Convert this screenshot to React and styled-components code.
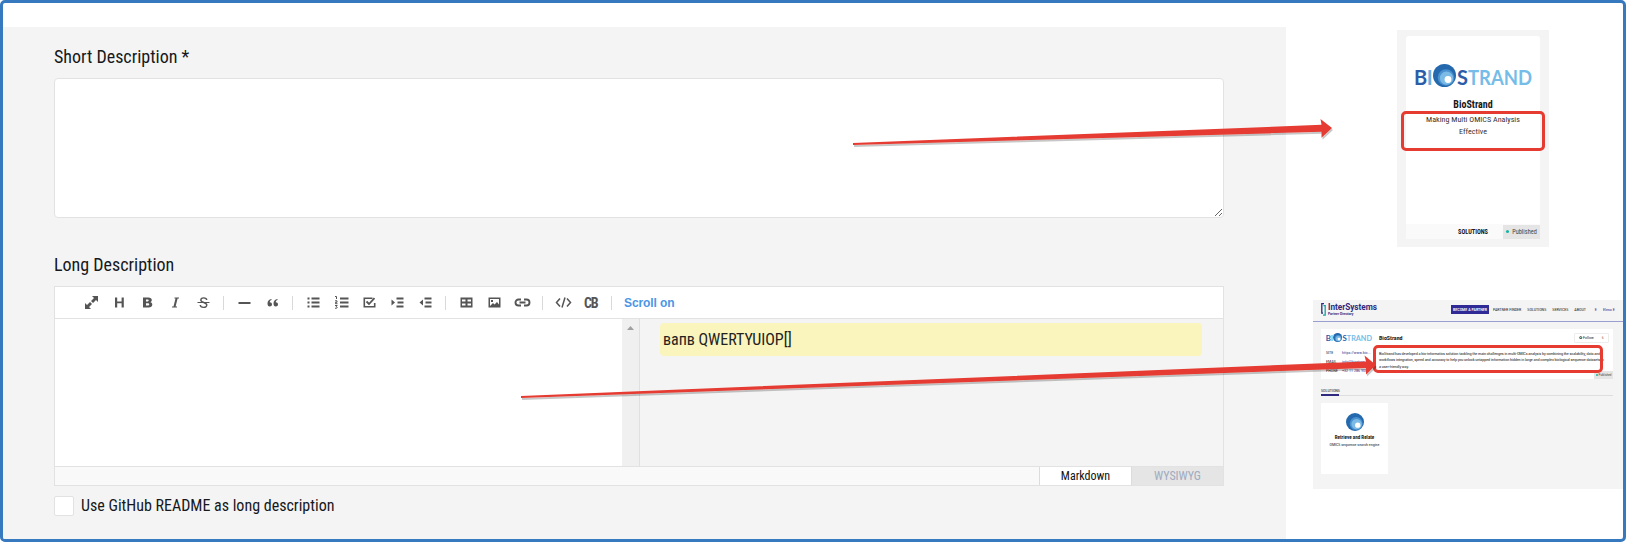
import React from 'react';
import styled, { createGlobalStyle, css } from 'styled-components';

const condensed = '"Roboto Condensed", Roboto, sans-serif';

const GlobalStyle = createGlobalStyle`
  *, *::before, *::after { box-sizing: border-box; }
  html, body { margin: 0; background: #fff; }
  body { font-family: ${condensed}; color: #16181b; }
`;

const Frame = styled.main`
  position: relative;
  display: flex;
  align-items: stretch;
  width: 1626px;
  height: 542px;
  padding-top: 24px;
  border: 3px solid #3679bf;
  border-radius: 5px;
  background: #fff;
  overflow: hidden;
`;

const FormPanel = styled.section`
  flex: none;
  width: 1283px;
  padding: 18px 62px 0 51px;
  background: #f4f4f4;
`;

const FieldLabel = styled.label`
  display: block;
  height: 33px;
  font-size: 18px;
  line-height: 24px;
`;

const ShortText = styled.textarea`
  display: block;
  width: 1170px;
  height: 140px;
  margin: 0 0 35px;
  padding: 8px;
  border: 1px solid #e2e2e2;
  border-radius: 4px;
  background: #fff;
  outline: none;
  resize: both;
`;

const Editor = styled.div`
  width: 1170px;
  height: 200px;
  border: 1px solid #e2e2e2;
`;

const Toolbar = styled.div`
  display: flex;
  align-items: center;
  height: 32px;
  padding-left: 22px;
  border-bottom: 1px solid #e2e2e2;
  background: #fff;
`;

const ToolButton = styled.span`
  display: grid;
  place-items: center;
  width: 28px;
  height: 28px;
  svg { display: block; }
`;

const Separator = styled.i`
  width: 1px;
  height: 14px;
  margin: 0 6px;
  background: #d9d9d9;
`;

const ScrollToggle = styled.span`
  margin-left: 6px;
  color: #4b96e6;
  font: bold 12px/16px "Liberation Sans", Arial, sans-serif;
  letter-spacing: -0.1px;
`;

const EditorBody = styled.div`
  display: flex;
  height: 147px;
`;

const Source = styled.div`
  flex: none;
  width: 567px;
  background: #fff;
`;

const ScrollTrack = styled.div`
  display: flex;
  justify-content: center;
  width: 17px;
  padding-top: 7px;
  background: #f0f0f0;
  svg { display: block; }
`;

const Preview = styled.div`
  flex: 1;
  padding: 4px 21px 0 20px;
  border-left: 1px solid #e0e0e0;
`;

const Highlight = styled.p`
  height: 33px;
  margin: 0;
  padding: 0 3px;
  border-radius: 4px;
  background: #faf4bd;
  font-size: 16px;
  line-height: 33px;
  color: #222;
`;

const ModeBar = styled.div`
  display: flex;
  justify-content: flex-end;
  height: 19px;
  border-top: 1px solid #e2e2e2;
  background: #f9f9f9;
`;

const ModeTab = styled.span`
  width: 92px;
  border-left: 1px solid #dcdcdc;
  background: ${p => (p.$active ? '#fff' : '#e5e5e5')};
  color: ${p => (p.$active ? '#111' : '#a0aabf')};
  font-size: 12px;
  line-height: 19px;
  text-align: center;
`;

const CheckRow = styled.label`
  display: flex;
  align-items: center;
  gap: 7px;
  margin-top: 10px;
  font-size: 16px;
  line-height: 20px;
`;

const CheckBox = styled.span`
  width: 20px;
  height: 20px;
  border: 1px solid #e2e2e2;
  border-radius: 2px;
  background: #fff;
`;

const Previews = styled.aside`
  display: flex;
  flex: 1;
  flex-direction: column;
  padding: 3px 0 0 27px;
`;

const CardShell = styled.div`
  width: 152px;
  height: 217px;
  margin: 0 0 53px 84px;
  padding: 6px 9px 9px;
  background: #f4f4f4;
`;

const SolutionCard = styled.article`
  position: relative;
  display: flex;
  flex-direction: column;
  align-items: center;
  height: 203px;
  padding-top: 28px;
  border-radius: 3px;
  background: #fff;
`;

const CardTitle = styled.strong`
  margin-top: 12px;
  font-size: 10px;
  line-height: 12px;
`;

const CardText = styled.p`
  margin: 2px 0 0;
  color: #333;
  font-size: 8.1px;
  line-height: 12px;
  text-align: center;
`;

const CardFooter = styled.footer`
  display: flex;
  justify-content: flex-end;
  align-items: center;
  width: 134px;
  height: 15px;
  margin-top: auto;
  background: #fafafa;
  font-size: 6.3px;
  font-weight: 700;
`;

const Status = styled.span`
  display: flex;
  align-items: center;
  justify-content: center;
  gap: ${p => (p.$tiny ? 1 : 3)}px;
  width: ${p => (p.$tiny ? 19 : 37)}px;
  height: ${p => (p.$tiny ? 8 : 14)}px;
  margin-left: ${p => (p.$tiny ? 0 : 15)}px;
  background: #e5e5e5;
  color: #444;
  font-size: ${p => (p.$tiny ? 3.3 : 6.3)}px;
  font-weight: 400;
  &::before {
    content: '';
    width: ${p => (p.$tiny ? 2 : 3)}px;
    height: ${p => (p.$tiny ? 2 : 3)}px;
    border-radius: 50%;
    background: #13b5a0;
  }
`;

const Callout = styled.div`
  position: absolute;
  border: 3px solid #e53b30;
  border-radius: 5px;
  ${p =>
    p.$wide
      ? css`left: 52px; top: 16px; width: 230px; height: 28px;`
      : css`left: -5px; top: 75px; width: 144px; height: 40px;`}
`;

const Site = styled.div`
  width: 310px;
  height: 189px;
  background: #f4f4f4;
  color: #222;
  font-size: 4.1px;
  line-height: 6px;
`;

const SiteHeader = styled.header`
  display: flex;
  align-items: flex-start;
  height: 22px;
  padding: 3px 0 0 8px;
  border-bottom: 1px solid #9a9fcf;
  svg { flex: none; }
`;

const Brand = styled.div`
  flex: none;
  width: 125px;
  padding-left: 2px;
  color: #2b2a80;
  font: 700 8.200px/9px Roboto, sans-serif;
  small { display: block; font-size: 3.3px; line-height: 4px; }
`;

const Nav = styled.nav`
  display: flex;
  align-items: center;
  gap: 6px;
  height: 9px;
  margin-top: 2px;
  white-space: nowrap;
`;

const NavButton = styled.b`
  flex: none;
  width: 38px;
  height: 9px;
  margin-right: -2px;
  background: #2f2a95;
  color: #fff;
  font-weight: 500;
  line-height: 9px;
  text-align: center;
`;

const NavUser = styled.span`
  margin-left: ${p => (p.$name ? 0 : 3)}px;
  color: #2f2a95;
`;

const Company = styled.section`
  position: relative;
  display: flex;
  width: 292px;
  height: 50px;
  margin: 7px 0 0 8px;
  padding: 4px 0 0 5px;
  background: #fff;
`;

const Facts = styled.div`
  flex: none;
  width: 53px;
  svg { display: block; margin-bottom: 8px; }
`;

const Fact = styled.div`
  display: flex;
  height: 8.8px;
  white-space: nowrap;
  span:first-child { width: 16px; }
  span:last-child { color: #3d3790; }
`;

const About = styled.div`
  flex: none;
  width: 230px;
  p {
    margin: 8px 0 0;
    font-size: 4.3px;
    line-height: 6.3px;
    letter-spacing: -0.14px;
    white-space: nowrap;
  }
`;

const CompanyHead = styled.div`
  display: flex;
  justify-content: space-between;
  b { margin-top: 1px; font-size: 6px; line-height: 8px; }
`;

const Follow = styled.span`
  display: flex;
  justify-content: space-around;
  width: 35px;
  height: 10px;
  border: 1px solid #ededed;
  border-radius: 1px;
  line-height: 8px;
  span { color: #c46a3c; }
`;

const StatusSpot = styled.div`
  position: absolute;
  right: 0;
  bottom: 0;
`;

const Section = styled.div`
  width: 292px;
  height: 10px;
  margin: 7px 0 7px 8px;
  border-bottom: 1px solid #dedede;
  span {
    display: block;
    width: 18px;
    height: 10px;
    border-bottom: 2px solid #2f2a80;
    line-height: 9px;
    white-space: nowrap;
  }
`;

const Product = styled.article`
  display: flex;
  flex-direction: column;
  align-items: center;
  width: 67px;
  height: 71px;
  margin-left: 8px;
  padding-top: 10px;
  background: #fff;
  white-space: nowrap;
  b { margin-top: 3px; font-size: 5.1px; line-height: 7px; }
  span { font-size: 4px; line-height: 7px; }
`;

const Arrows = styled.svg`
  position: absolute;
  left: -3px;
  top: -3px;
  pointer-events: none;
`;

const Ball = () => (
  <g>
    <circle cx="11.5" cy="11.5" r="11.5" fill="#2468ad" />
    <circle cx="13" cy="13.5" r="8.3" fill="#4a91cf" />
    <circle cx="13.5" cy="14.2" r="6.6" fill="#7cbbe6" />
    <circle cx="15" cy="15.5" r="3.4" fill="#fff" />
  </g>
);

const BioLogo = ({ width }) => (
  <svg width={width} height={width * 23 / 117} viewBox="0 0 117 23" overflow="visible">
    <g fontFamily="Lato, sans-serif" fontWeight="700" fontSize="20" style={{ fontKerning: 'none' }}>
      <text x="-1" y="21" fill="#2c5da9">B</text>
      <text x="11.8" y="21" fill="#69aee0">I</text>
      <text x="42" y="21" fill="#2c5da9">S</text>
      <text x="53" y="21" fill="#75bce8" textLength="64" lengthAdjust="spacingAndGlyphs">TRAND</text>
    </g>
    <g transform="translate(18 0)"><Ball /></g>
  </svg>
);

const glyphs = {
  expand: <path d="M8 1h6v6l-2-2-3 3-2-2 3-3zM7 14H1V8l2 2 3-3 2 2-3 3z" />,
  heading: <path d="M3 2.500h2.200v4h4.400v-4h2.200v10H9.600v-4.200H5.200v4.200H3z" />,
  bold: <path fillRule="evenodd" d="M3 2.500h5.300c2.200 0 3.500 1 3.500 2.600 0 1-.5 1.700-1.400 2.100 1.200.3 1.900 1.200 1.900 2.400 0 1.900-1.400 2.900-3.700 2.900H3zM6 4.500v1.900h1.700c1.400 0 1.400-1.900 0-1.900zM6 8.200v2.300h2c1.700 0 1.700-2.300 0-2.300z" />,
  italic: <path d="M6.500 2.500H11v1H9.600l-2 8h1.400v1H4v-1h1.500l2-8h-1z" />,
  strike: <><path d="M10.800 5C10.400 2.300 4.800 2 4.800 5c0 2.800 6 2.200 6 5 0 3.300-6.300 3-6.600 0" fill="none" stroke="#555" strokeWidth="1.400" /><path d="M1.500 7h12v1h-12z" /></>,
  line: <path d="M1.500 7h12v2h-12z" />,
  quote: <path d="M6.500 4C4 4.300 2.500 6 2.500 8.500c0 2 .8 3 2.200 3S7 10.700 7 9.300 6 7.200 4.700 7.300C4.800 6 5.500 5.200 6.500 5zM12.500 4C10 4.300 8.500 6 8.500 8.500c0 2 .8 3 2.200 3S13 10.700 13 9.300 12 7.200 10.700 7.300C10.800 6 11.500 5.200 12.500 5z" />,
  list: <path d="M1.500 2.500h2v2h-2zM5.500 2.500h8v2h-8zM1.500 6.500h2v2h-2zM5.500 6.500h8v2h-8zM1.500 10.500h2v2h-2zM5.500 10.500h8v2h-8z" />,
  ordered: <><path d="M6 2.500h8.500v2H6zM6 6.500h8.500v2H6zM6 10.500h8.500v2H6z" /><path d="M1 1.500h1.500V4M1 5.800h2v1.500H1.500v1.400h2M1 10.500h2.200l-1 1.200c2 .2 1 2-1.200 1.500" fill="none" stroke="#555" /></>,
  task: <><path d="M10.500 3.200H2.300v8.600h10.400V8" fill="none" stroke="#555" strokeWidth="1.600" /><path d="M4.500 6.500 7 9l5.500-5.800" fill="none" stroke="#555" strokeWidth="1.800" /></>,
  indent: <path d="M1.500 4.500v6l3.500-3zM6.500 2.500h7v2h-7zM7.500 6.500h6v2h-6zM6.500 10.500h7v2h-7z" />,
  outdent: <path d="M5 4.500v6l-3.500-3zM6.500 2.500h7v2h-7zM7.500 6.500h6v2h-6zM6.500 10.500h7v2h-7z" />,
  table: <path fillRule="evenodd" d="M1.500 2.500h12v10h-12zM3 4.500v2h3.500v-2zM8.500 4.500v2H12v-2zM3 8.500v2h3.500v-2zM8.500 8.500v2H12v-2z" />,
  image: <path fillRule="evenodd" d="M1.500 2.500h12v10h-12zM3 4v7l3-3 1.500 1.500L10 7l2 2.500V4zM4 5h2v2H4z" />,
  link: <path d="M6 4.500H3.500a3 3 0 0 0 0 6H6M9 4.500h2.500a3 3 0 0 1 0 6H9M4.500 7.500h6" fill="none" stroke="#555" strokeWidth="1.900" />,
  code: <path d="M4 3.500 0.500 7.500 4 11.500M11 3.500l3.500 4-3.500 4M9 2.500 6 12.500" fill="none" stroke="#555" strokeWidth="1.500" />,
  block: <text x="0" y="12.500" fontFamily="Roboto Condensed" fontWeight="700" fontSize="14" textLength="14.500">CB</text>,
};

const groups = [
  ['expand', 'heading', 'bold', 'italic', 'strike'],
  ['line', 'quote'],
  ['list', 'ordered', 'task', 'indent', 'outdent'],
  ['table', 'image', 'link'],
  ['code', 'block'],
];

const Tool = ({ name }) => (
  <ToolButton>
    <svg width="15" height="15" viewBox="0 0 15 15" fill="#555" overflow="visible">{glyphs[name]}</svg>
  </ToolButton>
);

export default function App() {
  return (
    <>
      <GlobalStyle />
      <Frame>
        <FormPanel>
          <FieldLabel htmlFor="short">Short Description *</FieldLabel>
          <ShortText id="short" />
          <FieldLabel>Long Description</FieldLabel>
          <Editor>
            <Toolbar>
              {groups.map(group => (
                <React.Fragment key={group[0]}>
                  {group.map(name => <Tool key={name} name={name} />)}
                  <Separator />
                </React.Fragment>
              ))}
              <ScrollToggle>Scroll on</ScrollToggle>
            </Toolbar>
            <EditorBody>
              <Source />
              <ScrollTrack>
                <svg width="7" height="4" viewBox="0 0 7 4"><path d="M3.500 0 7 4H0z" fill="#a0a0a0" /></svg>
              </ScrollTrack>
              <Preview><Highlight>вапв QWERTYUIOP[]</Highlight></Preview>
            </EditorBody>
            <ModeBar>
              <ModeTab $active>Markdown</ModeTab>
              <ModeTab>WYSIWYG</ModeTab>
            </ModeBar>
          </Editor>
          <CheckRow><CheckBox />Use GitHub README as long description</CheckRow>
        </FormPanel>

        <Previews>
          <CardShell>
            <SolutionCard>
              <BioLogo width={117} />
              <CardTitle>BioStrand</CardTitle>
              <CardText>Making Multi OMICS Analysis<br />Effective</CardText>
              <CardFooter>SOLUTIONS<Status>Published</Status></CardFooter>
              <Callout />
            </SolutionCard>
          </CardShell>

          <Site>
            <SiteHeader>
              <svg width="5" height="13" viewBox="0 0 5 13" fill="none" strokeWidth="1.300">
                <path d="M3 .7H.8v9.500H2" stroke="#2b2a80" /><path d="M2.500 2.700h1.700v9.500H2" stroke="#10a5a0" />
              </svg>
              <Brand>InterSystems<small>Partner Directory</small></Brand>
              <Nav>
                <NavButton>BECOME A PARTNER</NavButton>
                <span>PARTNER FINDER</span>
                <span>SOLUTIONS</span>
                <span>SERVICES</span>
                <span>ABOUT</span>
                <NavUser>E</NavUser>
                <NavUser $name>Elena E</NavUser>
              </Nav>
            </SiteHeader>
            <Company>
              <Facts>
                <BioLogo width={46} />
                <Fact><span>SITE</span><span>https://www.bio...</span></Fact>
                <Fact><span>EMAIL</span><span>info@biostran...</span></Fact>
                <Fact><span>PHONE</span><span>+32 11 286 900</span></Fact>
              </Facts>
              <About>
                <CompanyHead><b>BioStrand</b><Follow>✿ Follow<span>6</span></Follow></CompanyHead>
                <p>
                  BioStrand has developed a bio-informatics solution tackling the main challenges in multi-OMICs analysis by combining the scalability, data and<br />
                  workflows integration, speed and accuracy to help you unlock untapped information hidden in large and complex biological sequence datasets in<br />
                  a user-friendly way.
                </p>
              </About>
              <StatusSpot><Status $tiny>Published</Status></StatusSpot>
              <Callout $wide />
            </Company>
            <Section><span>SOLUTIONS</span></Section>
            <Product>
              <svg width="18" height="18" viewBox="0 0 23 23"><Ball /></svg>
              <b>Retrieve and Relate</b>
              <span>OMICS sequence search engine</span>
            </Product>
          </Site>
        </Previews>

        <Arrows width="1626" height="542" viewBox="0 0 1626 542">
          <defs>
            <filter id="shade" x="-5%" y="-20%" width="110%" height="150%">
              <feDropShadow dx="1" dy="2" stdDeviation="0.500" floodColor="#000" floodOpacity="0.220" />
            </filter>
          </defs>
          <g fill="#e53b30" filter="url(#shade)">
            <path d="M853 143 1321.500 124.800 1320.500 119 1332 128 1321.500 137.700 1321.500 131.800 853 145z" />
            <path d="M521 396 1366 361.500 1364.500 355.500 1376 365 1366 374.500 1366 368 521 398z" />
          </g>
        </Arrows>
      </Frame>
    </>
  );
}
